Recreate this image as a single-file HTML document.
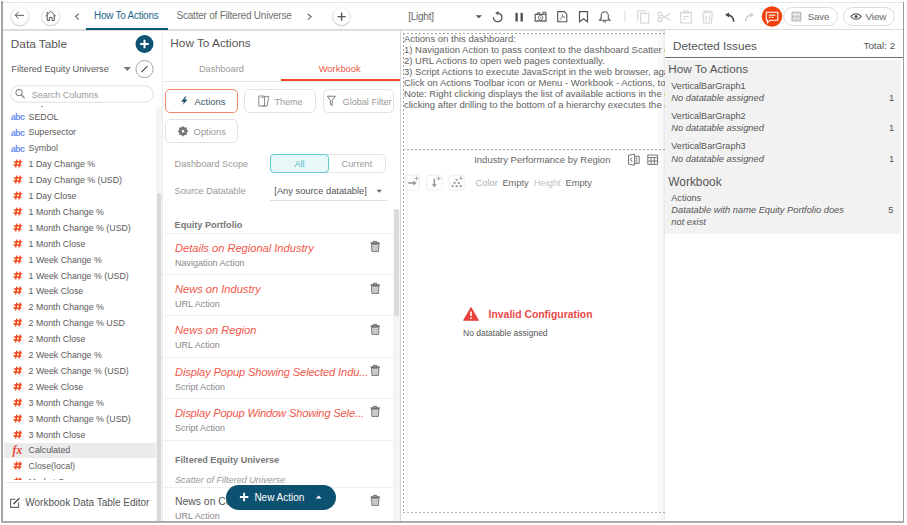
<!DOCTYPE html>
<html><head><meta charset="utf-8">
<style>
*{box-sizing:border-box;margin:0;padding:0}
html,body{width:907px;height:525px;overflow:hidden;background:#fff}
body{position:relative;font-family:"Liberation Sans",sans-serif;color:#555}
.a{position:absolute}
.t{position:absolute;white-space:nowrap;line-height:14px}
svg{position:absolute;overflow:visible}
</style></head><body>

<!-- frame -->
<div class="a" style="left:1px;top:1px;width:2px;height:522px;background:#a4a4a4"></div>
<div class="a" style="left:3px;top:2px;width:900px;height:1px;background:#e6e8e8"></div>
<div class="a" style="left:903px;top:2px;width:1px;height:521px;background:#9a9a9a"></div>
<div class="a" style="left:1px;top:521px;width:903px;height:2px;background:#ababab"></div>

<!-- ===== TOP BAR ===== -->
<div class="a" style="left:3px;top:29px;width:900px;height:2px;background:#dcdcdc"></div>
<div class="a" style="left:86px;top:28px;width:82px;height:2px;background:#0d5a78"></div>
<svg style="left:0;top:0" width="907" height="30">
  <defs><linearGradient id="cg" x1="0" y1="0" x2="0" y2="1"><stop offset="0" stop-color="#f6f6f6"/><stop offset="0.45" stop-color="#e6e6e6"/><stop offset="1" stop-color="#d6d6d6"/></linearGradient></defs>
  <circle cx="19.8" cy="16.5" r="9.2" fill="none" stroke="url(#cg)" stroke-width="1.2"/>
  <path d="M15.2 15.3 H24 M18.6 11.9 L15.2 15.3 L18.6 18.7" fill="none" stroke="#5a5a5a" stroke-width="1"/>
  <circle cx="50.7" cy="16.5" r="9.2" fill="none" stroke="url(#cg)" stroke-width="1.2"/>
  <path d="M45.6 16.2 L50.7 11.3 L55.8 16.2 M47.2 14.8 V20.5 H49.4 V17.4 H52 V20.5 H54.2 V14.8 M47.2 11.8 V14.2" fill="none" stroke="#555" stroke-width="1"/>
  <path d="M78.8 13.6 L75.6 16.6 L78.8 19.6" fill="none" stroke="#666" stroke-width="1.1"/>
  <path d="M307.8 14 L311.2 16.8 L307.8 19.6" fill="none" stroke="#666" stroke-width="1.1"/>
  <circle cx="341.6" cy="16.6" r="9" fill="none" stroke="url(#cg)" stroke-width="1.3"/>
  <path d="M337.5 16.6 H345.7 M341.6 12.5 V20.7" fill="none" stroke="#555" stroke-width="1.4"/>
  <!-- dropdown -->
  <path d="M475.6 15.3 H482 L478.8 18.3 Z" fill="#555"/>
  <!-- refresh -->
  <path d="M497.6 13.1 A4.3 4.3 0 1 1 493.4 17.2" fill="none" stroke="#555" stroke-width="1.3"/>
  <path d="M495.2 13.1 L498.4 10.9 L498.4 15.3 Z" fill="#555"/>
  <!-- pause -->
  <rect x="515.4" y="12.9" width="2.4" height="8.6" fill="#555"/>
  <rect x="520.5" y="12.9" width="2.4" height="8.6" fill="#555"/>
  <!-- camera -->
  <path d="M535.2 14.4 H546 V21 H535.2 Z" fill="none" stroke="#666" stroke-width="1.3"/>
  <path d="M536.6 14.4 L537.8 12.8 H539.6 V14.4 M543 14.4 V12.2 H545.8 V14.4" fill="none" stroke="#666" stroke-width="1.1"/>
  <circle cx="540.6" cy="17.7" r="2.3" fill="none" stroke="#777" stroke-width="1"/>
  <circle cx="540.6" cy="17.7" r="0.8" fill="#888"/>
  <!-- pdf -->
  <path d="M557.7 11.6 H564.2 L566.8 14.2 V21.8 H557.7 Z" fill="none" stroke="#555" stroke-width="1.1"/>
  <path d="M559.6 20.2 L562.6 16.6 L562 14.2 M562.6 16.6 L565.2 17.4" fill="none" stroke="#666" stroke-width="0.9"/>
  <!-- bookmark -->
  <path d="M579.5 11.6 H587.5 V21.8 L583.5 18.8 L579.5 21.8 Z" fill="none" stroke="#555" stroke-width="1.2"/>
  <!-- bell -->
  <path d="M599.5 20.2 H610 L608.3 18.4 V15.6 A3.5 3.8 0 0 0 601.2 15.6 V18.4 Z M603.3 21.8 H606.2" fill="none" stroke="#555" stroke-width="1.1"/>
  <!-- separator -->
  <rect x="624.3" y="10.5" width="1" height="11.5" fill="#ddd"/>
  <!-- copy -->
  <path d="M640.6 13.4 H648.8 V23 H640.6 Z M637.6 21 V10.8 H645.8" fill="none" stroke="#d4d4d4" stroke-width="1.1"/>
  <!-- scissors -->
  <circle cx="659.8" cy="14" r="2" fill="none" stroke="#d4d4d4" stroke-width="1.1"/>
  <circle cx="659.8" cy="19.6" r="2" fill="none" stroke="#d4d4d4" stroke-width="1.1"/>
  <path d="M661.5 15 L670.8 20.4 M661.5 18.6 L670.8 13.2" fill="none" stroke="#d4d4d4" stroke-width="1.1"/>
  <!-- clipboard -->
  <path d="M680.7 12.6 H691.3 V23 H680.7 Z M683.6 12.6 V11 H688.4 V12.6 M683 16.5 H689 M683 19 H686.5" fill="none" stroke="#d4d4d4" stroke-width="1.1"/>
  <!-- trash -->
  <path d="M701.8 12.8 H713.4 M704.5 12.8 V11 H710.7 V12.8 M703 13.8 L703.8 23 H711.4 L712.2 13.8 M705.9 15.5 V21.5 M709.3 15.5 V21.5" fill="none" stroke="#d4d4d4" stroke-width="1.1"/>
  <!-- undo -->
  <path d="M733.8 21.8 C733.5 17.5 731 15.2 727.5 15" fill="none" stroke="#444" stroke-width="1.5"/>
  <path d="M725 14.8 L729 12.4 L729.4 17.6 Z" fill="#444"/>
  <!-- redo -->
  <path d="M745.4 21.8 C745.7 17.5 748.2 15.2 751.7 15" fill="none" stroke="#d0d0d0" stroke-width="1.3"/>
  <path d="M754.2 14.8 L750.2 12.4 L749.8 17.6 Z" fill="#d0d0d0"/>
  <!-- issues orange -->
  <circle cx="772" cy="16.5" r="10.2" fill="#f1400d"/>
  <path d="M766.3 12.3 H777.8 V20.3 H770 L767.4 22.8 V20.3 H766.3 Z" fill="none" stroke="#fff" stroke-width="1.1"/>
  <rect x="768.8" y="14.6" width="6.6" height="1.1" fill="#fff"/>
  <rect x="768.8" y="16.8" width="1.6" height="1.1" fill="#fff"/>
  <rect x="771.6" y="16.8" width="1.6" height="1.1" fill="#fff"/>
  <!-- save pill -->
  <rect x="783.5" y="7.5" width="54" height="18" rx="9" fill="#fff" stroke="#dcdcdc" stroke-width="1"/>
  <rect x="791.4" y="11.8" width="10" height="9.6" rx="1" fill="#bdbdbd"/>
  <rect x="792.8" y="13.2" width="7.2" height="2.4" fill="#eee"/>
  <rect x="793.2" y="16.8" width="6.4" height="3.6" fill="#e6e6e6"/>
  <path d="M795.4 16.8 V20.4 M797.4 16.8 V20.4" stroke="#bbb" stroke-width="0.6"/>
  <!-- view pill -->
  <rect x="843.5" y="7.5" width="51" height="18" rx="9" fill="#fff" stroke="#dcdcdc" stroke-width="1"/>
  <path d="M851 16.5 C853.5 12.8 858.7 12.8 861.2 16.5 C858.7 20.2 853.5 20.2 851 16.5 Z" fill="none" stroke="#555" stroke-width="1.1"/>
  <circle cx="856.1" cy="16.5" r="1.6" fill="#555"/>
</svg>
<div class="t" style="left:94px;top:9.4px;font-size:10px;letter-spacing:-0.27px;color:#24698c">How To Actions</div>
<div class="t" style="left:176.5px;top:9.4px;font-size:10px;letter-spacing:-0.22px;color:#707070">Scatter of Filtered Universe</div>
<div class="t" style="left:408.2px;top:9.9px;font-size:10px;letter-spacing:-0.24px;color:#666">[Light]</div>
<div class="t" style="left:807.8px;top:10.45px;font-size:9.6px;letter-spacing:-0.15px;color:#666">Save</div>
<div class="t" style="left:865.5px;top:10.45px;font-size:9.9px;letter-spacing:-0.1px;color:#666">View</div>


<!-- ===== LEFT PANEL ===== -->
<div class="a" style="left:161.5px;top:31px;width:1px;height:490px;background:#ececec"></div>
<div class="t" style="left:10.8px;top:37.4px;font-size:11.8px;color:#555">Data Table</div>
<svg style="left:0;top:0" width="165" height="110">
  <circle cx="144.5" cy="44" r="9" fill="#0f5273"/>
  <path d="M140.2 44 H148.8 M144.5 39.7 V48.3" stroke="#fff" stroke-width="2"/>
  <path d="M123.6 67 H131 L127.3 71 Z" fill="#777"/>
  <circle cx="144.5" cy="69.1" r="8.6" fill="#fff" stroke="#a8a8a8" stroke-width="1"/>
  <path d="M141.4 72.2 L147.4 66.2" stroke="#444" stroke-width="1.15"/>
  <rect x="10.8" y="85.8" width="142.4" height="16.4" rx="8.2" fill="#fff" stroke="#e0e0e0" stroke-width="1"/>
  <circle cx="19" cy="92.6" r="3.2" fill="none" stroke="#777" stroke-width="1"/>
  <path d="M21.3 95 L24.6 98.2" stroke="#777" stroke-width="1.1"/>
</svg>
<div class="t" style="left:11.3px;top:62.1px;font-size:9.2px;color:#5a5a5a">Filtered Equity Universe</div>
<div class="t" style="left:31.8px;top:87.5px;font-size:9px;color:#9a9a9a">Search Columns</div>
<div class="a" style="left:0;top:106px;width:156px;height:374px;overflow:hidden">
<div class="a" style="left:0;top:-106px;width:156px;height:500px">
<div class="a" style="left:41px;top:105.5px;width:2px;height:1px;background:#999"></div>
<!--ITEMS-->
<div class="t" style="left:10.7px;top:109.98px;font-size:9.0px;font-weight:bold;color:#6b8ef4;letter-spacing:-0.6px">abc</div>
<div class="t" style="left:28.6px;top:109.5px;font-size:8.8px;color:#5a5a5a">SEDOL</div>
<div class="t" style="left:10.7px;top:125.88px;font-size:9.0px;font-weight:bold;color:#6b8ef4;letter-spacing:-0.6px">abc</div>
<div class="t" style="left:28.6px;top:125.4px;font-size:8.8px;color:#5a5a5a">Supersector</div>
<div class="t" style="left:10.7px;top:141.78px;font-size:9.0px;font-weight:bold;color:#6b8ef4;letter-spacing:-0.6px">abc</div>
<div class="t" style="left:28.6px;top:141.3px;font-size:8.8px;color:#5a5a5a">Symbol</div>
<svg style="left:12.5px;top:159.2px" width="10" height="9"><path d="M4 0.6 L2.5 8.4 M7.4 0.6 L5.9 8.4 M0.9 3 H8.9 M0.4 6 H8.4" stroke="#f4461c" stroke-width="1.45" fill="none"/></svg>
<div class="t" style="left:28.6px;top:157.2px;font-size:8.8px;color:#5a5a5a">1 Day Change %</div>
<svg style="left:12.5px;top:175.1px" width="10" height="9"><path d="M4 0.6 L2.5 8.4 M7.4 0.6 L5.9 8.4 M0.9 3 H8.9 M0.4 6 H8.4" stroke="#f4461c" stroke-width="1.45" fill="none"/></svg>
<div class="t" style="left:28.6px;top:173.1px;font-size:8.8px;color:#5a5a5a">1 Day Change % (USD)</div>
<svg style="left:12.5px;top:191.0px" width="10" height="9"><path d="M4 0.6 L2.5 8.4 M7.4 0.6 L5.9 8.4 M0.9 3 H8.9 M0.4 6 H8.4" stroke="#f4461c" stroke-width="1.45" fill="none"/></svg>
<div class="t" style="left:28.6px;top:189.0px;font-size:8.8px;color:#5a5a5a">1 Day Close</div>
<svg style="left:12.5px;top:206.9px" width="10" height="9"><path d="M4 0.6 L2.5 8.4 M7.4 0.6 L5.9 8.4 M0.9 3 H8.9 M0.4 6 H8.4" stroke="#f4461c" stroke-width="1.45" fill="none"/></svg>
<div class="t" style="left:28.6px;top:204.9px;font-size:8.8px;color:#5a5a5a">1 Month Change %</div>
<svg style="left:12.5px;top:222.8px" width="10" height="9"><path d="M4 0.6 L2.5 8.4 M7.4 0.6 L5.9 8.4 M0.9 3 H8.9 M0.4 6 H8.4" stroke="#f4461c" stroke-width="1.45" fill="none"/></svg>
<div class="t" style="left:28.6px;top:220.8px;font-size:8.8px;color:#5a5a5a">1 Month Change % (USD)</div>
<svg style="left:12.5px;top:238.7px" width="10" height="9"><path d="M4 0.6 L2.5 8.4 M7.4 0.6 L5.9 8.4 M0.9 3 H8.9 M0.4 6 H8.4" stroke="#f4461c" stroke-width="1.45" fill="none"/></svg>
<div class="t" style="left:28.6px;top:236.7px;font-size:8.8px;color:#5a5a5a">1 Month Close</div>
<svg style="left:12.5px;top:254.6px" width="10" height="9"><path d="M4 0.6 L2.5 8.4 M7.4 0.6 L5.9 8.4 M0.9 3 H8.9 M0.4 6 H8.4" stroke="#f4461c" stroke-width="1.45" fill="none"/></svg>
<div class="t" style="left:28.6px;top:252.6px;font-size:8.8px;color:#5a5a5a">1 Week Change %</div>
<svg style="left:12.5px;top:270.5px" width="10" height="9"><path d="M4 0.6 L2.5 8.4 M7.4 0.6 L5.9 8.4 M0.9 3 H8.9 M0.4 6 H8.4" stroke="#f4461c" stroke-width="1.45" fill="none"/></svg>
<div class="t" style="left:28.6px;top:268.5px;font-size:8.8px;color:#5a5a5a">1 Week Change % (USD)</div>
<svg style="left:12.5px;top:286.4px" width="10" height="9"><path d="M4 0.6 L2.5 8.4 M7.4 0.6 L5.9 8.4 M0.9 3 H8.9 M0.4 6 H8.4" stroke="#f4461c" stroke-width="1.45" fill="none"/></svg>
<div class="t" style="left:28.6px;top:284.4px;font-size:8.8px;color:#5a5a5a">1 Week Close</div>
<svg style="left:12.5px;top:302.3px" width="10" height="9"><path d="M4 0.6 L2.5 8.4 M7.4 0.6 L5.9 8.4 M0.9 3 H8.9 M0.4 6 H8.4" stroke="#f4461c" stroke-width="1.45" fill="none"/></svg>
<div class="t" style="left:28.6px;top:300.3px;font-size:8.8px;color:#5a5a5a">2 Month Change %</div>
<svg style="left:12.5px;top:318.2px" width="10" height="9"><path d="M4 0.6 L2.5 8.4 M7.4 0.6 L5.9 8.4 M0.9 3 H8.9 M0.4 6 H8.4" stroke="#f4461c" stroke-width="1.45" fill="none"/></svg>
<div class="t" style="left:28.6px;top:316.2px;font-size:8.8px;color:#5a5a5a">2 Month Change % USD</div>
<svg style="left:12.5px;top:334.1px" width="10" height="9"><path d="M4 0.6 L2.5 8.4 M7.4 0.6 L5.9 8.4 M0.9 3 H8.9 M0.4 6 H8.4" stroke="#f4461c" stroke-width="1.45" fill="none"/></svg>
<div class="t" style="left:28.6px;top:332.1px;font-size:8.8px;color:#5a5a5a">2 Month Close</div>
<svg style="left:12.5px;top:350.0px" width="10" height="9"><path d="M4 0.6 L2.5 8.4 M7.4 0.6 L5.9 8.4 M0.9 3 H8.9 M0.4 6 H8.4" stroke="#f4461c" stroke-width="1.45" fill="none"/></svg>
<div class="t" style="left:28.6px;top:348.0px;font-size:8.8px;color:#5a5a5a">2 Week Change %</div>
<svg style="left:12.5px;top:365.9px" width="10" height="9"><path d="M4 0.6 L2.5 8.4 M7.4 0.6 L5.9 8.4 M0.9 3 H8.9 M0.4 6 H8.4" stroke="#f4461c" stroke-width="1.45" fill="none"/></svg>
<div class="t" style="left:28.6px;top:363.9px;font-size:8.8px;color:#5a5a5a">2 Week Change % (USD)</div>
<svg style="left:12.5px;top:381.8px" width="10" height="9"><path d="M4 0.6 L2.5 8.4 M7.4 0.6 L5.9 8.4 M0.9 3 H8.9 M0.4 6 H8.4" stroke="#f4461c" stroke-width="1.45" fill="none"/></svg>
<div class="t" style="left:28.6px;top:379.8px;font-size:8.8px;color:#5a5a5a">2 Week Close</div>
<svg style="left:12.5px;top:397.7px" width="10" height="9"><path d="M4 0.6 L2.5 8.4 M7.4 0.6 L5.9 8.4 M0.9 3 H8.9 M0.4 6 H8.4" stroke="#f4461c" stroke-width="1.45" fill="none"/></svg>
<div class="t" style="left:28.6px;top:395.7px;font-size:8.8px;color:#5a5a5a">3 Month Change %</div>
<svg style="left:12.5px;top:413.6px" width="10" height="9"><path d="M4 0.6 L2.5 8.4 M7.4 0.6 L5.9 8.4 M0.9 3 H8.9 M0.4 6 H8.4" stroke="#f4461c" stroke-width="1.45" fill="none"/></svg>
<div class="t" style="left:28.6px;top:411.6px;font-size:8.8px;color:#5a5a5a">3 Month Change % (USD)</div>
<svg style="left:12.5px;top:429.5px" width="10" height="9"><path d="M4 0.6 L2.5 8.4 M7.4 0.6 L5.9 8.4 M0.9 3 H8.9 M0.4 6 H8.4" stroke="#f4461c" stroke-width="1.45" fill="none"/></svg>
<div class="t" style="left:28.6px;top:427.5px;font-size:8.8px;color:#5a5a5a">3 Month Close</div>
<div class="a" style="left:4px;top:442.5px;width:152px;height:15.5px;background:#ebebeb"></div>
<div class="t" style="left:12.6px;top:442.8px;font-size:11.5px;font-family:'Liberation Serif',serif;font-style:italic;font-weight:bold;color:#e6452e">fx</div>
<div class="t" style="left:28.6px;top:443.4px;font-size:8.8px;color:#5a5a5a">Calculated</div>
<svg style="left:12.5px;top:461.3px" width="10" height="9"><path d="M4 0.6 L2.5 8.4 M7.4 0.6 L5.9 8.4 M0.9 3 H8.9 M0.4 6 H8.4" stroke="#f4461c" stroke-width="1.45" fill="none"/></svg>
<div class="t" style="left:28.6px;top:459.3px;font-size:8.8px;color:#5a5a5a">Close(local)</div>
<svg style="left:12.5px;top:477.2px" width="10" height="9"><path d="M4 0.6 L2.5 8.4 M7.4 0.6 L5.9 8.4 M0.9 3 H8.9 M0.4 6 H8.4" stroke="#f4461c" stroke-width="1.45" fill="none"/></svg>
<div class="t" style="left:28.6px;top:475.2px;font-size:8.8px;color:#5a5a5a">Market Cap</div>
<!--/ITEMS-->
</div></div>
<div class="a" style="left:155.5px;top:107px;width:6px;height:414px;background:#f5f5f5"></div>
<div class="a" style="left:156.5px;top:192.6px;width:4.2px;height:328.4px;background:#d8d8d8;border-radius:2px 2px 0 0"></div>
<div class="a" style="left:6px;top:482px;width:150px;height:1px;background:#e6e6e6"></div>
<svg style="left:0;top:490px" width="30" height="20">
  <path d="M15.5 9.2 H10.6 V17.4 H18.6 V12.6" fill="none" stroke="#666" stroke-width="1.1"/>
  <path d="M13.6 14 L19.4 8.2" stroke="#333" stroke-width="1.2"/>
</svg>
<div class="t" style="left:25.3px;top:495.6px;font-size:10px;color:#555">Workbook Data Table Editor</div>

<!-- ===== MIDDLE PANEL ===== -->
<div class="t" style="left:170.3px;top:36.36px;font-size:11.8px;line-height:14px;color:#555;">How To Actions</div>
<div class="t" style="left:198.9px;top:61.60px;font-size:9.2px;line-height:14px;color:#999;">Dashboard</div>
<div class="t" style="left:318.7px;top:61.67px;font-size:9.4px;line-height:14px;color:#f2574a;">Workbook</div>
<div class="a" style="left:162px;top:81px;width:238px;height:1px;background:#e8e8e8"></div>
<div class="a" style="left:281px;top:79px;width:119px;height:2px;background:#f04a23"></div>
<div class="a" style="left:165px;top:89.2px;width:72.8px;height:23.4px;border:1.8px solid #f5866b;border-radius:5px"></div>
<div class="a" style="left:244.2px;top:89.2px;width:71.8px;height:23.4px;border:1px solid #e2e2e2;border-radius:5px"></div>
<div class="a" style="left:322.8px;top:89.2px;width:71.6px;height:23.4px;border:1px solid #e2e2e2;border-radius:5px"></div>
<div class="a" style="left:165.2px;top:119.4px;width:72.6px;height:23.2px;border:1px solid #e2e2e2;border-radius:5px"></div>
<svg style="left:0;top:0" width="400" height="150">
  <path d="M185.2 96.6 L181.2 101.8 H184 L182.6 105 L187.6 99.6 H184.6 L186.4 96.6 Z" fill="#1e4d66"/>
  <path d="M258.8 96 H264.6 V106 H258.8 Z" fill="none" stroke="#888" stroke-width="1"/>
  <path d="M261.5 97.5 L268.8 96.2 L267 106.2 L262 106" fill="none" stroke="#888" stroke-width="1"/>
  <path d="M327.4 96.2 H335.2 L332.2 100.6 V105.6 L330.4 104.4 V100.6 Z" fill="none" stroke="#777" stroke-width="1"/>
  <g transform="translate(183 131.2)"><circle r="3.2" fill="none" stroke="#777" stroke-width="2"/><path d="M0 -5 V5 M-5 0 H5 M-3.6 -3.6 L3.6 3.6 M-3.6 3.6 L3.6 -3.6" stroke="#777" stroke-width="1.6"/><circle r="1.2" fill="#fff"/></g>
</svg>
<div class="t" style="left:194.6px;top:94.77px;font-size:9.4px;line-height:14px;color:#3a5668;">Actions</div>
<div class="t" style="left:274.4px;top:94.63px;font-size:9.0px;line-height:14px;color:#999;">Theme</div>
<div class="t" style="left:342.6px;top:94.66px;font-size:9.1px;line-height:14px;color:#999;">Global Filter</div>
<div class="t" style="left:193.6px;top:124.77px;font-size:9.4px;line-height:14px;color:#999;">Options</div>
<div class="t" style="left:174.6px;top:157.00px;font-size:9.2px;line-height:14px;color:#999;">Dashboard Scope</div>
<div class="t" style="left:174.6px;top:184.10px;font-size:9.2px;line-height:14px;color:#999;">Source Datatable</div>
<div class="a" style="left:270.4px;top:154.3px;width:116.1px;height:18.9px;border:1px solid #e4e4e4;border-radius:4px"></div>
<div class="a" style="left:270.4px;top:154.3px;width:58.4px;height:18.9px;border:1.5px solid #5fcdd0;background:#e8f8f9;border-radius:4px"></div>
<div class="t" style="left:294.4px;top:157.10px;font-size:9.2px;line-height:14px;color:#52c0c6;">All</div>
<div class="t" style="left:341.6px;top:157.10px;font-size:9.2px;line-height:14px;color:#999;">Current</div>
<div class="t" style="left:274.3px;top:183.94px;font-size:9.3px;line-height:14px;color:#555;">[Any source datatable]</div>
<svg style="left:0;top:0" width="400" height="210"><path d="M376.6 189.8 H382 L379.3 192.8 Z" fill="#666"/></svg>
<div class="a" style="left:270px;top:200px;width:116.5px;height:1px;background:#dcdcdc"></div>
<div class="t" style="left:174.6px;top:217.56px;font-size:9.1px;line-height:14px;color:#777;font-weight:bold">Equity Portfolio</div>
<div class="a" style="left:162px;top:233.2px;width:231px;height:1px;background:#efefef"></div>
<div class="a" style="left:162px;top:274.4px;width:231px;height:1px;background:#efefef"></div>
<div class="a" style="left:162px;top:315.4px;width:231px;height:1px;background:#efefef"></div>
<div class="a" style="left:162px;top:357.1px;width:231px;height:1px;background:#efefef"></div>
<div class="a" style="left:162px;top:398.1px;width:231px;height:1px;background:#efefef"></div>
<div class="a" style="left:162px;top:440.2px;width:231px;height:1px;background:#efefef"></div>
<div class="t" style="left:175px;top:240.90px;font-size:11.1px;line-height:14px;color:#f2574a;font-style:italic;">Details on Regional Industry</div>
<div class="t" style="left:175px;top:255.93px;font-size:9.0px;line-height:14px;color:#888;">Navigation Action</div>
<svg style="left:369.6px;top:241.4px" width="11" height="12"><path d="M1.5 3.2 H8.9 L8.5 10.4 H1.9 Z" fill="#d2d2d2" stroke="#6a6a6a" stroke-width="0.9"/><path d="M0.6 2.1 H9.8" stroke="#555" stroke-width="1.4"/><path d="M3.4 1.6 V0.4 H6.6 V1.6" fill="none" stroke="#555" stroke-width="0.9"/><path d="M4.1 4.6 V9 M6.3 4.6 V9" stroke="#aaa" stroke-width="0.6"/></svg>
<div class="t" style="left:175px;top:282.10px;font-size:11.1px;line-height:14px;color:#f2574a;font-style:italic;">News on Industry</div>
<div class="t" style="left:175px;top:297.13px;font-size:9.0px;line-height:14px;color:#888;">URL Action</div>
<svg style="left:369.6px;top:282.6px" width="11" height="12"><path d="M1.5 3.2 H8.9 L8.5 10.4 H1.9 Z" fill="#d2d2d2" stroke="#6a6a6a" stroke-width="0.9"/><path d="M0.6 2.1 H9.8" stroke="#555" stroke-width="1.4"/><path d="M3.4 1.6 V0.4 H6.6 V1.6" fill="none" stroke="#555" stroke-width="0.9"/><path d="M4.1 4.6 V9 M6.3 4.6 V9" stroke="#aaa" stroke-width="0.6"/></svg>
<div class="t" style="left:175px;top:323.10px;font-size:11.1px;line-height:14px;color:#f2574a;font-style:italic;">News on Region</div>
<div class="t" style="left:175px;top:338.13px;font-size:9.0px;line-height:14px;color:#888;">URL Action</div>
<svg style="left:369.6px;top:323.6px" width="11" height="12"><path d="M1.5 3.2 H8.9 L8.5 10.4 H1.9 Z" fill="#d2d2d2" stroke="#6a6a6a" stroke-width="0.9"/><path d="M0.6 2.1 H9.8" stroke="#555" stroke-width="1.4"/><path d="M3.4 1.6 V0.4 H6.6 V1.6" fill="none" stroke="#555" stroke-width="0.9"/><path d="M4.1 4.6 V9 M6.3 4.6 V9" stroke="#aaa" stroke-width="0.6"/></svg>
<div class="t" style="left:175px;top:364.80px;font-size:11.1px;line-height:14px;color:#f2574a;font-style:italic;letter-spacing:-0.11px;">Display Popup Showing Selected Indu...</div>
<div class="t" style="left:175px;top:379.83px;font-size:9.0px;line-height:14px;color:#888;">Script Action</div>
<svg style="left:369.6px;top:365.3px" width="11" height="12"><path d="M1.5 3.2 H8.9 L8.5 10.4 H1.9 Z" fill="#d2d2d2" stroke="#6a6a6a" stroke-width="0.9"/><path d="M0.6 2.1 H9.8" stroke="#555" stroke-width="1.4"/><path d="M3.4 1.6 V0.4 H6.6 V1.6" fill="none" stroke="#555" stroke-width="0.9"/><path d="M4.1 4.6 V9 M6.3 4.6 V9" stroke="#aaa" stroke-width="0.6"/></svg>
<div class="t" style="left:175px;top:405.80px;font-size:11.1px;line-height:14px;color:#f2574a;font-style:italic;letter-spacing:-0.15px;">Display Popup Window Showing Sele...</div>
<div class="t" style="left:175px;top:420.83px;font-size:9.0px;line-height:14px;color:#888;">Script Action</div>
<svg style="left:369.6px;top:406.3px" width="11" height="12"><path d="M1.5 3.2 H8.9 L8.5 10.4 H1.9 Z" fill="#d2d2d2" stroke="#6a6a6a" stroke-width="0.9"/><path d="M0.6 2.1 H9.8" stroke="#555" stroke-width="1.4"/><path d="M3.4 1.6 V0.4 H6.6 V1.6" fill="none" stroke="#555" stroke-width="0.9"/><path d="M4.1 4.6 V9 M6.3 4.6 V9" stroke="#aaa" stroke-width="0.6"/></svg>
<div class="t" style="left:175px;top:453.26px;font-size:9.1px;line-height:14px;color:#777;font-weight:bold">Filtered Equity Universe</div>
<div class="t" style="left:175px;top:472.76px;font-size:9.1px;line-height:14px;color:#999;font-style:italic">Scatter of Filtered Universe</div>
<div class="a" style="left:162px;top:487.2px;width:231px;height:1px;background:#efefef"></div>
<div class="t" style="left:175px;top:495.2px;font-size:10.4px;line-height:14px;color:#555;">News on Country</div>
<div class="t" style="left:175px;top:509.23px;font-size:9.0px;line-height:14px;color:#888;">URL Action</div>
<svg style="left:369.6px;top:494.6px" width="11" height="12"><path d="M1.5 3.2 H8.9 L8.5 10.4 H1.9 Z" fill="#d2d2d2" stroke="#6a6a6a" stroke-width="0.9"/><path d="M0.6 2.1 H9.8" stroke="#555" stroke-width="1.4"/><path d="M3.4 1.6 V0.4 H6.6 V1.6" fill="none" stroke="#555" stroke-width="0.9"/><path d="M4.1 4.6 V9 M6.3 4.6 V9" stroke="#aaa" stroke-width="0.6"/></svg>
<div class="a" style="left:393px;top:209px;width:6.5px;height:312px;background:#f4f4f4"></div>
<div class="a" style="left:393.8px;top:209.1px;width:5.4px;height:106.7px;background:#dadada;border-radius:3px"></div>
<div class="a" style="left:225.8px;top:484.5px;width:109.8px;height:25.1px;background:#0d5170;border-radius:12.6px"></div>
<svg style="left:0;top:480px" width="400" height="40"><path d="M239.9 17 H248.3 M244.1 12.8 V21.2" stroke="#fff" stroke-width="1.8"/><path d="M315.8 18.6 H321.6 L318.7 15.6 Z" fill="#fff"/></svg>
<div class="t" style="left:254.4px;top:491.0px;font-size:10.0px;line-height:14px;color:#fff;">New Action</div>
<div class="a" style="left:399.5px;top:30px;width:1.6px;height:491px;background:#d6d6d6"></div>
<!-- ===== CANVAS ===== -->
<div class="a" style="left:0;top:0;width:665px;height:525px;overflow:hidden">
<div class="a" style="left:403px;top:33px;width:1px;height:480px;background:repeating-linear-gradient(to bottom,#a8a8a8 0 2px,transparent 2px 4px)"></div>
<div class="a" style="left:403px;top:512px;width:262px;height:1px;background:repeating-linear-gradient(to right,#b8b8b8 0 2px,transparent 2px 4px)"></div>
<div class="a" style="left:403px;top:33px;width:262px;height:1px;background:repeating-linear-gradient(to right,#a8a8a8 0 2px,transparent 2px 4px)"></div>
<div class="a" style="left:403px;top:149px;width:262px;height:1px;background:repeating-linear-gradient(to right,#a8a8a8 0 2px,transparent 2px 4px)"></div>
<div class="t" style="left:404px;top:31.81px;font-size:9.5px;line-height:14px;color:#626262;">Actions on this dashboard:</div>
<div class="t" style="left:404px;top:42.81px;font-size:9.5px;line-height:14px;color:#626262;">1) Navigation Action to pass context to the dashboard Scatter of Filtered Universe</div>
<div class="t" style="left:404px;top:53.81px;font-size:9.5px;line-height:14px;color:#626262;">2) URL Actions to open web pages contextually.</div>
<div class="t" style="left:404px;top:64.81px;font-size:9.5px;line-height:14px;color:#626262;">3) Script Actions to execute JavaScript in the web browser, again</div>
<div class="t" style="left:404px;top:75.81px;font-size:9.5px;line-height:14px;color:#626262;">Click on Actions Toolbar icon or Menu - Workbook - Actions, to see</div>
<div class="t" style="left:404px;top:86.81px;font-size:9.5px;line-height:14px;color:#626262;">Note: Right clicking displays the list of available actions in the context menu</div>
<div class="t" style="left:404px;top:97.81px;font-size:9.5px;line-height:14px;color:#626262;">clicking after drilling to the bottom of a hierarchy executes the action</div>
<div class="t" style="left:474.2px;top:152.51px;font-size:9.5px;line-height:14px;color:#666;">Industry Performance by Region</div>
<div class="t" style="left:475.6px;top:175.64px;font-size:9.3px;line-height:14px;color:#b0b0b0;">Color</div>
<div class="t" style="left:502.4px;top:175.64px;font-size:9.3px;line-height:14px;color:#666;">Empty</div>
<div class="t" style="left:533.8px;top:175.64px;font-size:9.3px;line-height:14px;color:#c0c0c0;">Height</div>
<div class="t" style="left:565.5px;top:175.64px;font-size:9.3px;line-height:14px;color:#666;">Empty</div>
<svg style="left:0;top:0" width="665" height="340">
  <rect x="405" y="175.2" width="14.6" height="15" rx="2.5" fill="none" stroke="#ececec" stroke-width="1"/>
  <rect x="426.8" y="175.2" width="15.4" height="15" rx="2.5" fill="none" stroke="#ececec" stroke-width="1"/>
  <rect x="449.2" y="175.2" width="15" height="15" rx="2.5" fill="none" stroke="#ececec" stroke-width="1"/>
  <path d="M408.2 183 H414.4" stroke="#999" stroke-width="1.6"/><path d="M413.4 180.4 L416.8 183 L413.4 185.6 Z" fill="#999"/>
  <path d="M414.6 178.5 H418.6 M416.6 176.5 V180.5" stroke="#aaa" stroke-width="1"/>
  <path d="M434.3 178.8 V185" stroke="#999" stroke-width="1.6"/><path d="M431.7 184.2 L434.3 187.6 L436.9 184.2 Z" fill="#999"/>
  <path d="M436.7 178.5 H440.7 M438.7 176.5 V180.5" stroke="#aaa" stroke-width="1"/>
  <g fill="#999"><circle cx="456.6" cy="179.8" r="1.15"/><circle cx="454.6" cy="183" r="1.15"/><circle cx="458.8" cy="183" r="1.15"/><circle cx="452.6" cy="186.2" r="1.15"/><circle cx="456.6" cy="186.2" r="1.15"/><circle cx="460.6" cy="186.2" r="1.15"/></g>
  <path d="M459 178.3 H463 M461 176.3 V180.3" stroke="#aaa" stroke-width="1"/>
  <!-- excel -->
  <path d="M628.5 155.2 L634.6 154.2 V165.2 L628.5 164.2 Z" fill="none" stroke="#777" stroke-width="1"/>
  <path d="M634.6 156.2 H639.2 V163.4 H634.6" fill="none" stroke="#777" stroke-width="1"/>
  <path d="M636.5 156.5 V163" stroke="#aaa" stroke-width="1.6"/>
  <path d="M632.2 157.6 L630.4 159.7 L632.2 161.8" fill="none" stroke="#555" stroke-width="1"/>
  <!-- table -->
  <path d="M647.8 155 H657.6 V164.4 H647.8 Z M647.8 157.6 H657.6 M647.8 161 H657.6 M651.1 157.6 V164.4 M654.4 157.6 V164.4" fill="none" stroke="#777" stroke-width="1"/>
  <!-- warning -->
  <path d="M471 307.8 L478.2 320.2 H463.8 Z" fill="#e8413a" stroke="#e8413a" stroke-width="1.2" stroke-linejoin="round"/>
  <path d="M471 311.6 V316" stroke="#fff" stroke-width="1.6"/><circle cx="471" cy="318.2" r="0.9" fill="#fff"/>
</svg>
<div class="t" style="left:488.6px;top:308.4px;font-size:10.4px;line-height:14px;color:#e84a4c;font-weight:bold">Invalid Configuration</div>
<div class="t" style="left:463px;top:325.74px;font-size:8.5px;line-height:14px;color:#555;">No datatable assigned</div>
</div>
<!-- ===== RIGHT PANEL ===== -->
<div class="a" style="left:657px;top:30px;width:8px;height:491px;background:linear-gradient(to right,rgba(0,0,0,0.01),rgba(0,0,0,0.03) 70%,rgba(0,0,0,0.09))"></div>
<div class="a" style="left:665px;top:30px;width:238px;height:491px;background:#fff"></div>
<div class="a" style="left:665px;top:59.5px;width:236px;height:174.3px;background:#f2f2f2"></div>
<div class="a" style="left:665px;top:56.8px;width:238px;height:1.2px;background:#6a6a6a"></div>
<div class="t" style="left:673px;top:39.32px;font-size:11.7px;line-height:14px;color:#555;">Detected Issues</div>
<div class="t" style="left:863.5px;top:38.62px;font-size:9.8px;line-height:14px;color:#555;">Total: 2</div>
<div class="t" style="left:668.3px;top:62.2px;font-size:11.7px;line-height:14px;color:#555;">How To Actions</div>
<div class="t" style="left:671.3px;top:78.76px;font-size:9.1px;line-height:14px;color:#555;">VerticalBarGraph1</div>
<div class="t" style="left:671.3px;top:90.94px;font-size:9.3px;line-height:14px;color:#555;font-style:italic">No datatable assigned</div>
<div class="t" style="left:889px;top:90.94px;font-size:9.3px;line-height:14px;color:#555;">1</div>
<div class="t" style="left:671.3px;top:109.06px;font-size:9.1px;line-height:14px;color:#555;">VerticalBarGraph2</div>
<div class="t" style="left:671.3px;top:121.24px;font-size:9.3px;line-height:14px;color:#555;font-style:italic">No datatable assigned</div>
<div class="t" style="left:889px;top:121.24px;font-size:9.3px;line-height:14px;color:#555;">1</div>
<div class="t" style="left:671.3px;top:139.36px;font-size:9.1px;line-height:14px;color:#555;">VerticalBarGraph3</div>
<div class="t" style="left:671.3px;top:151.54px;font-size:9.3px;line-height:14px;color:#555;font-style:italic">No datatable assigned</div>
<div class="t" style="left:889px;top:151.54px;font-size:9.3px;line-height:14px;color:#555;">1</div>
<div class="t" style="left:668.3px;top:174.90px;font-size:11.9px;line-height:14px;color:#555;">Workbook</div>
<div class="t" style="left:671.3px;top:190.56px;font-size:9.1px;line-height:14px;color:#555;">Actions</div>
<div class="t" style="left:671.3px;top:203.04px;font-size:9.3px;line-height:14px;color:#555;font-style:italic">Datatable with name Equity Portfolio does</div>
<div class="t" style="left:671.3px;top:214.74px;font-size:9.3px;line-height:14px;color:#555;font-style:italic">not exist</div>
<div class="t" style="left:888.2px;top:203.04px;font-size:9.3px;line-height:14px;color:#555;">5</div>

</body></html>
